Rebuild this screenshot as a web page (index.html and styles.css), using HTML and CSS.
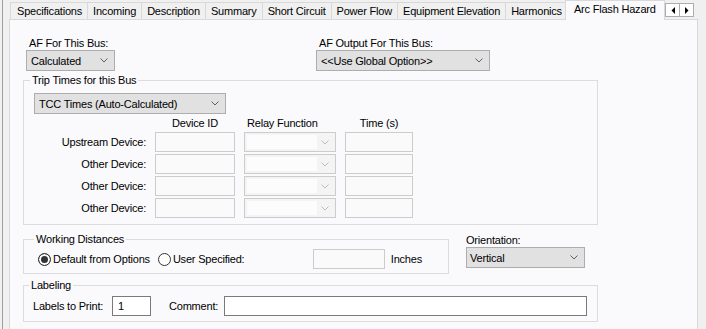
FILE: index.html
```html
<!DOCTYPE html>
<html lang="en">
<head>
    <meta charset="UTF-8">
    <title>Bus Data - Arc Flash Hazard</title>
    <link rel="stylesheet" href="styles.css">
</head>
<body>
    <div class="frame">
        <div class="tabs">
            <div class="tab">Specifications</div>
            <div class="tab">Incoming</div>
            <div class="tab">Description</div>
            <div class="tab">Summary</div>
            <div class="tab">Short Circuit</div>
            <div class="tab">Power Flow</div>
            <div class="tab">Equipment Elevation</div>
            <div class="tab">Harmonics</div>
            <div class="tab active">Arc Flash Hazard</div>
            <div class="tab-scroll">
                <span class="scroll-btn">
                    <svg width="4" height="7" viewBox="0 0 4 7"><path d="M4 0 L0.5 3.5 L4 7 Z" fill="#000"/></svg>
                </span>
                <span class="scroll-btn">
                    <svg width="4" height="7" viewBox="0 0 4 7"><path d="M0 0 L3.5 3.5 L0 7 Z" fill="#000"/></svg>
                </span>
            </div>
        </div>

        <div class="panel">
            <div class="top-row">
                <div class="field field-af">
                    <label>AF For This Bus:</label>
                    <div class="combo combo-calc">
                        <span>Calculated</span>
                        <svg class="chev" width="8" height="5" viewBox="0 0 8 5"><path d="M0.5 0.5 L4 4 L7.5 0.5"/></svg>
                    </div>
                </div>
                <div class="field">
                    <label>AF Output For This Bus:</label>
                    <div class="combo combo-output">
                        <span>&lt;&lt;Use Global Option&gt;&gt;</span>
                        <svg class="chev" width="8" height="5" viewBox="0 0 8 5"><path d="M0.5 0.5 L4 4 L7.5 0.5"/></svg>
                    </div>
                </div>
            </div>

            <fieldset class="group group-trip">
                <legend>Trip Times for this Bus</legend>
                <div class="combo combo-tcc">
                    <span>TCC Times (Auto-Calculated)</span>
                    <svg class="chev" width="8" height="5" viewBox="0 0 8 5"><path d="M0.5 0.5 L4 4 L7.5 0.5"/></svg>
                </div>

                <div class="trip-grid">
                    <span></span>
                    <span class="col-head center">Device ID</span>
                    <span class="col-head">Relay Function</span>
                    <span class="col-head center">Time (s)</span>

                    <span class="row-label">Upstream Device:</span>
                    <span class="text-box"></span>
                    <span class="combo combo-off"><i></i><svg class="chev" width="8" height="5" viewBox="0 0 8 5"><path d="M0.5 0.5 L4 4 L7.5 0.5"/></svg></span>
                    <span class="text-box"></span>

                    <span class="row-label">Other Device:</span>
                    <span class="text-box"></span>
                    <span class="combo combo-off"><i></i><svg class="chev" width="8" height="5" viewBox="0 0 8 5"><path d="M0.5 0.5 L4 4 L7.5 0.5"/></svg></span>
                    <span class="text-box"></span>

                    <span class="row-label">Other Device:</span>
                    <span class="text-box"></span>
                    <span class="combo combo-off"><i></i><svg class="chev" width="8" height="5" viewBox="0 0 8 5"><path d="M0.5 0.5 L4 4 L7.5 0.5"/></svg></span>
                    <span class="text-box"></span>

                    <span class="row-label">Other Device:</span>
                    <span class="text-box"></span>
                    <span class="combo combo-off"><i></i><svg class="chev" width="8" height="5" viewBox="0 0 8 5"><path d="M0.5 0.5 L4 4 L7.5 0.5"/></svg></span>
                    <span class="text-box"></span>
                </div>
            </fieldset>

            <div class="mid-row">
                <fieldset class="group group-wd">
                    <legend>Working Distances</legend>
                    <div class="radio-row">
                        <span class="radio checked"></span>
                        <span class="radio-text">Default from Options</span>
                        <span class="radio second"></span>
                        <span class="radio-text">User Specified:</span>
                        <span class="text-box wd-box"></span>
                        <span class="unit">Inches</span>
                    </div>
                </fieldset>
                <div class="field field-orient">
                    <label>Orientation:</label>
                    <div class="combo combo-orient">
                        <span>Vertical</span>
                        <svg class="chev" width="8" height="5" viewBox="0 0 8 5"><path d="M0.5 0.5 L4 4 L7.5 0.5"/></svg>
                    </div>
                </div>
            </div>

            <fieldset class="group group-label">
                <legend>Labeling</legend>
                <div class="label-row">
                    <span class="lbl-print">Labels to Print:</span>
                    <span class="text-box edit box-count">1</span>
                    <span class="lbl-comment">Comment:</span>
                    <span class="text-box edit box-comment"></span>
                </div>
            </fieldset>
        </div>
    </div>
</body>
</html>
```

FILE: styles.css
```css
* {
    margin: 0;
    padding: 0;
    box-sizing: border-box;
}

body {
    background: #f0f0f0;
    font-family: 'Liberation Sans', Arial, sans-serif;
    font-size: 11px;
    letter-spacing: -0.2px;
    color: #000;
    overflow: hidden;
}

.frame {
    width: 706px;
    height: 329px;
    margin-left: 2px;
    border-left: 1px solid #a0a0a0;
    padding-left: 6px;
    overflow: hidden;
}

/* Tab strip */
.tabs {
    display: flex;
    align-items: flex-end;
    height: 19px;
    width: 689px;
    padding-left: 1px;
}

.tab {
    height: 17px;
    line-height: 16px;
    padding: 0 5px;
    background: #f0f0f0;
    border: 1px solid #d9d9d9;
    border-bottom: none;
    margin-left: -1px;
    white-space: nowrap;
}

.tab:first-child {
    margin-left: 0;
    padding-left: 6px;
}

.tab.active {
    position: relative;
    z-index: 1;
    height: 20px;
    line-height: 17px;
    margin: 0 -2px -1px -3px;
    padding: 0 8px;
    background: #fafafc;
    border-color: #d9d9d9;
}

.tab-scroll {
    display: flex;
    align-self: flex-start;
    margin: 3px 4px 0 auto;
}

.scroll-btn {
    display: flex;
    align-items: center;
    justify-content: center;
    width: 15px;
    height: 14px;
    background: #fff;
    border: 1px solid #adadad;
}

.scroll-btn + .scroll-btn {
    margin-left: -1px;
}

/* Page */
.panel {
    width: 689px;
    height: 320px;
    background: #fafafc;
    border: 1px solid #d9d9d9;
    padding: 17px 0 0 13px;
}

.field label {
    display: block;
    line-height: 13px;
    padding-left: 3px;
}

.top-row {
    display: flex;
    padding-left: 3px;
}

.field-af {
    width: 290px;
}

.combo {
    display: flex;
    align-items: center;
    justify-content: space-between;
    height: 21px;
    padding: 0 6px 0 4px;
    background: #e1e1e1;
    border: 1px solid #adadad;
    white-space: nowrap;
}

.chev {
    flex: none;
    fill: none;
    stroke: #606060;
    stroke-width: 1;
}

.combo-calc {
    width: 89px;
}

.combo-output {
    width: 174px;
}

/* Group boxes */
.group {
    border: 1px solid #dcdcdc;
    min-width: 0;
}

.group legend {
    line-height: 12px;
    padding: 0 2px;
    margin-left: -4px;
}

.group-trip {
    width: 575px;
    margin-top: 3px;
    padding: 7px 10px 6px 10px;
}

.combo-tcc {
    width: 192px;
}

.trip-grid {
    display: grid;
    grid-template-columns: 112px 80px 92px 68px;
    grid-template-rows: 13px repeat(4, 20px);
    column-gap: 9px;
    row-gap: 2px;
    margin-top: 3px;
}

.col-head {
    line-height: 13px;
    padding-left: 3px;
}

.col-head.center {
    text-align: center;
    padding-left: 0;
}

.row-label {
    line-height: 20px;
    text-align: right;
}

.text-box {
    display: block;
    height: 20px;
    background: #fafafa;
    border: 1px solid #cccccc;
}

.combo-off {
    height: 20px;
    padding: 2px 6px 2px 2px;
    background: #f4f4f4;
    border-color: #cccccc;
}

.combo-off i {
    align-self: stretch;
    width: 70px;
    background: #fcfcfc;
}

.combo-off .chev {
    stroke: #bdbdbd;
}

.mid-row {
    display: flex;
    margin-top: 8px;
}

.group-wd {
    width: 426px;
    padding: 4px 26px 4px 14px;
}

.radio-row {
    display: flex;
    align-items: center;
    height: 20px;
}

.radio {
    flex: none;
    width: 13px;
    height: 13px;
    border: 1px solid #333;
    border-radius: 50%;
    background: #fff;
}

.radio.checked {
    background: #333;
    box-shadow: inset 0 0 0 2px #fff;
}

.radio.second {
    margin-left: 8px;
}

.radio-text {
    margin-left: 2px;
    white-space: nowrap;
}

.wd-box {
    width: 72px;
    margin-left: auto;
}

.unit {
    margin-left: 6px;
}

.field-orient {
    margin-left: 17px;
    padding-top: 1px;
}

.field-orient label {
    padding-left: 0;
}

.combo-orient {
    width: 119px;
    padding-left: 3px;
}

.group-label {
    width: 575px;
    margin-top: 5px;
    padding: 5px 10px 5px 9px;
}

.label-row {
    display: flex;
    align-items: center;
    height: 20px;
}

.lbl-print {
    width: 79px;
    flex: none;
}

.edit {
    background: #fff;
    border-color: #7a7a7a;
    line-height: 18px;
    padding-left: 5px;
}

.box-count {
    width: 39px;
}

.lbl-comment {
    width: 55px;
    margin-left: 18px;
    flex: none;
}

.box-comment {
    flex: 1;
}
```
